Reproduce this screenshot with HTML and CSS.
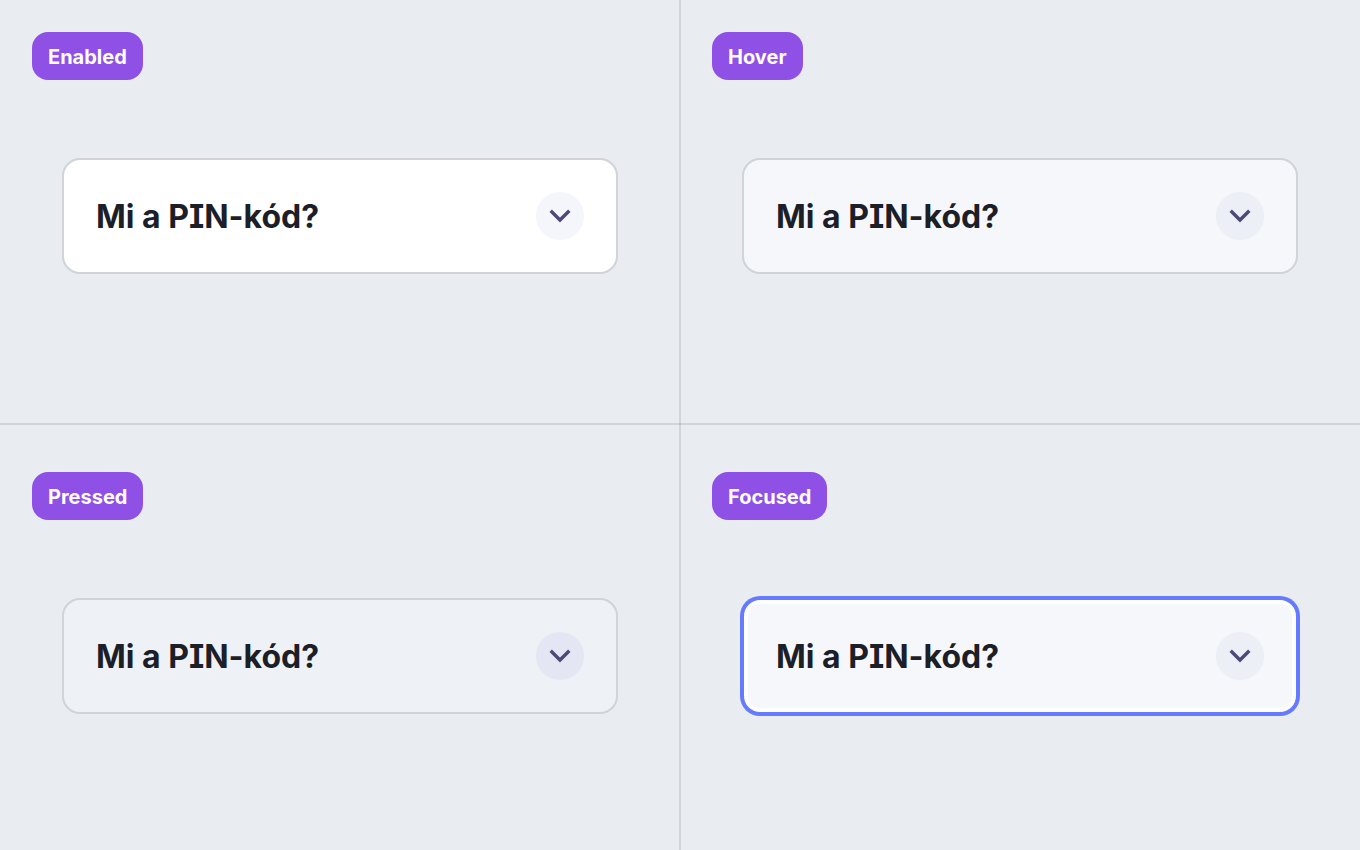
FILE: index.html
```html
<!DOCTYPE html>
<html lang="hu">
<head>
<meta charset="utf-8">
<meta name="viewport" content="width=device-width, initial-scale=1">
<title>Accordion states</title>
<link rel="stylesheet" href="styles.css">
</head>
<body>
<main class="states">
  <section class="state">
    <span class="tag">Enabled</span>
    <button class="accordion" type="button" aria-expanded="false">
      <span class="title">Mi a PIN-kód?</span>
      <span class="toggle"><svg class="chevron" viewBox="0 0 24 24" aria-hidden="true"><path d="M2.7 6.8 12 16 21.3 6.8"/></svg></span>
    </button>
  </section>
  <section class="state">
    <span class="tag">Hover</span>
    <button class="accordion is-hover" type="button" aria-expanded="false">
      <span class="title">Mi a PIN-kód?</span>
      <span class="toggle"><svg class="chevron" viewBox="0 0 24 24" aria-hidden="true"><path d="M2.7 6.8 12 16 21.3 6.8"/></svg></span>
    </button>
  </section>
  <section class="state">
    <span class="tag">Pressed</span>
    <button class="accordion is-pressed" type="button" aria-expanded="false">
      <span class="title">Mi a PIN-kód?</span>
      <span class="toggle"><svg class="chevron" viewBox="0 0 24 24" aria-hidden="true"><path d="M2.7 6.8 12 16 21.3 6.8"/></svg></span>
    </button>
  </section>
  <section class="state">
    <span class="tag">Focused</span>
    <button class="accordion is-focused" type="button" aria-expanded="false">
      <span class="title">Mi a PIN-kód?</span>
      <span class="toggle"><svg class="chevron" viewBox="0 0 24 24" aria-hidden="true"><path d="M2.7 6.8 12 16 21.3 6.8"/></svg></span>
    </button>
  </section>
</main>
</body>
</html>
```

FILE: styles.css
```css
* { box-sizing: border-box; }

body {
  margin: 0;
  background: #e9ecf1;
  font-family: Inter, "Liberation Sans", sans-serif;
}

.states {
  position: relative;
  display: grid;
  grid-template-columns: 1fr 1fr;
  grid-template-rows: 1fr 1fr;
  min-height: 100vh;
}

/* Vertical rule centred over the seam between the columns */
.states::before {
  content: "";
  position: absolute;
  top: 0;
  bottom: 0;
  left: calc(50% - 1px);
  width: 2px;
  background: rgba(0, 0, 0, 0.1);
}

.state {
  display: flex;
  flex-direction: column;
  align-items: flex-start;
  gap: 78px;
  padding: 32px;
  border-bottom: 2px solid rgba(0, 0, 0, 0.1);
}

.state:nth-child(n + 3) {
  padding-top: 47px;
  border-bottom: 0;
}

.tag,
.title {
  padding-top: 2px;
  font-weight: 700;
  line-height: 46px;
}

.tag {
  padding-inline: 16px;
  border-radius: 16px;
  background: #8f50e6;
  color: #fff;
  font-size: 20px;
}

.accordion {
  display: flex;
  align-self: stretch;
  align-items: center;
  justify-content: space-between;
  margin: 0 30px;
  padding: 32px;
  border: 2px solid #d0d3da;
  border-radius: 18px;
  background: #fff;
  color: #1c1e28;
  font: inherit;
  text-align: left;
}

.title {
  font-size: 32px;
  font-feature-settings: "cv08";
}

.toggle {
  display: flex;
  align-items: center;
  justify-content: center;
  width: 48px;
  height: 48px;
  border-radius: 50%;
  background: #f5f6fb;
}

.chevron {
  width: 24px;
  height: 24px;
  fill: none;
  stroke: #4c4b78;
  stroke-width: 3.4;
}

.is-hover,
.is-focused { background: #f6f7fb; }

.is-hover .toggle,
.is-focused .toggle { background: #edeff6; }

.is-pressed { background: #eef1f6; }

.is-pressed .toggle { background: #e4e6f4; }

.is-focused {
  border-color: #657bff;
  box-shadow: 0 0 0 2px #657bff, inset 0 0 0 4px #fff;
}
```
